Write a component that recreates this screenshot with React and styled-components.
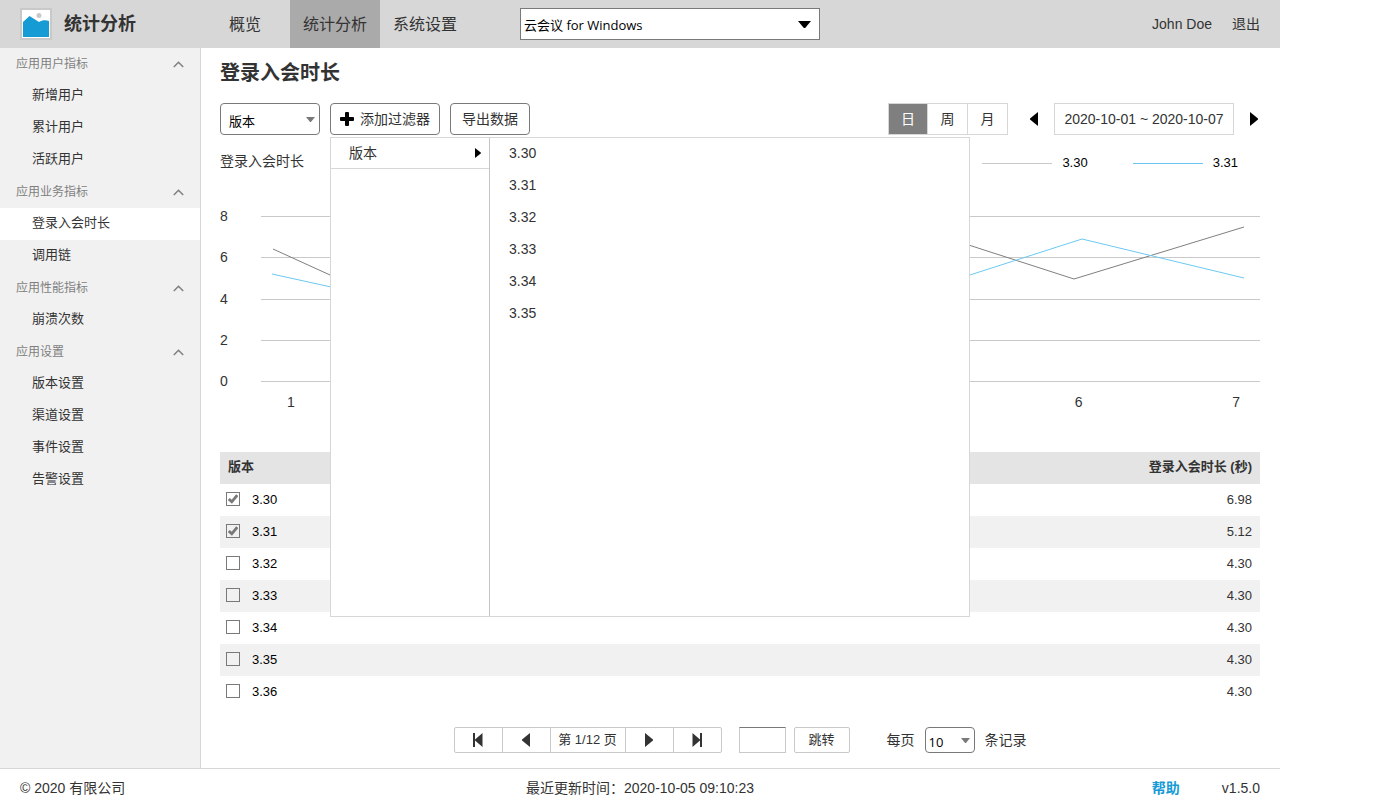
import React, { useState } from "react";
import styled, { createGlobalStyle, css } from "styled-components";

const GlobalStyle = createGlobalStyle`
  *, *::before, *::after { box-sizing: border-box; }
  body {
    margin: 0;
    background: #fff;
    color: #333;
    font-family: "Liberation Sans", "Noto Sans CJK SC", sans-serif;
    font-size: 14px;
    line-height: 20px;
  }
  button, input, select { font: inherit; color: inherit; margin: 0; }
  a { color: inherit; text-decoration: none; }
  ul { list-style: none; margin: 0; padding: 0; }
`;

const Page = styled.div`
  display: flex;
  flex-direction: column;
  max-width: 1280px;
  min-height: 100vh;
`;

const Header = styled.header`
  display: flex;
  align-items: center;
  height: 48px;
  padding-right: 20px;
  background: #d7d7d7;
`;

const Brand = styled.div`
  display: flex;
  align-items: center;
  gap: 12px;
  width: 200px;
  padding-left: 20px;
  font-size: 18px;
  font-weight: 700;
  svg { display: block; }
`;

const Nav = styled.nav`
  display: flex;
  align-self: stretch;
`;

const NavLink = styled.a`
  display: flex;
  align-items: center;
  justify-content: center;
  width: 90px;
  padding-top: 2px;
  font-size: 16px;
  background: ${(p) => (p.$active ? "#aaa" : "transparent")};
`;

const UserMenu = styled.div`
  display: flex;
  gap: 20px;
  margin-left: auto;
`;

const SelectBox = styled.span`
  display: inline-grid;
  align-items: center;
  width: ${(p) => p.$width}px;
  select, svg { grid-area: 1 / 1; }
  svg {
    justify-self: end;
    margin-right: ${(p) => (p.$square ? 9 : 5)}px;
    pointer-events: none;
  }
`;

const Select = styled.select`
  appearance: none;
  width: 100%;
  height: ${(p) => p.$height}px;
  padding: ${(p) => p.$pad};
  border: 1px solid #797979;
  border-radius: ${(p) => (p.$square ? 0 : 4)}px;
  background: #fff;
  color: #000;
  font-family: "Open Sans", "Noto Sans CJK SC", sans-serif;
  font-size: 13px;
`;

const AppPicker = styled.div`
  display: flex;
  margin-left: 50px;
`;

const Body = styled.div`
  display: flex;
  flex: 1;
`;

const Sidebar = styled.aside`
  flex: none;
  width: 201px;
  border-right: 1px solid #d7d7d7;
  background: #f1f1f1;
`;

const GroupButton = styled.button`
  display: flex;
  align-items: center;
  justify-content: space-between;
  width: 100%;
  height: 32px;
  padding: 0 16px;
  border: 0;
  background: none;
  color: #7f7f7f;
  font-size: 12px;
`;

const SideLink = styled.a`
  display: block;
  height: 32px;
  padding: 5px 32px 7px;
  font-size: 13px;
  background: ${(p) => (p.$active ? "#fff" : "transparent")};
`;

const Main = styled.main`
  flex: 1;
  min-width: 0;
  padding: 11px 20px 15px 19px;
`;

const Title = styled.h1`
  margin: 0;
  font-size: 20px;
  line-height: 28px;
  font-weight: 700;
`;

const Toolbar = styled.div`
  display: flex;
  align-items: center;
  gap: 10px;
  margin-top: 16px;
`;

const FilterAnchor = styled.div`
  position: relative;
`;

const ToolButton = styled.button`
  display: flex;
  align-items: center;
  justify-content: center;
  gap: 6px;
  width: ${(p) => p.$width}px;
  height: 32px;
  padding: 0;
  border: 1px solid #797979;
  border-radius: 4px;
  background: #fff;
`;

const Popup = styled.div`
  position: absolute;
  z-index: 2;
  top: 34px;
  left: 0;
  display: flex;
  width: 640px;
  height: 480px;
  border: 1px solid #d7d7d7;
  background: #fff;
`;

const PopupFields = styled.div`
  width: 159px;
  border-right: 1px solid #c4c4c4;
`;

const PopupValues = styled.ul`
  flex: 1;
`;

const FieldButton = styled.button`
  display: flex;
  align-items: center;
  justify-content: space-between;
  width: 100%;
  height: 31px;
  padding: 0 8px 0 18px;
  border: 0;
  border-bottom: 1px solid #d7d7d7;
  background: none;
`;

const ValueButton = styled.button`
  display: block;
  width: 100%;
  height: 32px;
  padding: 0 19px 2px;
  border: 0;
  background: none;
  text-align: left;
`;

const DateTools = styled.div`
  display: flex;
  align-items: center;
  margin-left: auto;
`;

const Segments = styled.div`
  display: flex;
  margin-right: 20px;
  border: 1px solid #d7d7d7;
`;

const Segment = styled.button`
  width: ${(p) => (p.$last ? 39 : 40)}px;
  height: 30px;
  padding: 0;
  border: 0;
  border-right: ${(p) => (p.$last ? 0 : 1)}px solid #d7d7d7;
  background: ${(p) => (p.$active ? "#7f7f7f" : "#fff")};
  color: ${(p) => (p.$active ? "#fff" : "#333")};
  &:first-child { width: 39px; }
`;

const ArrowButton = styled.button`
  display: flex;
  padding: 8px 2px;
  border: 0;
  background: none;
`;

const DateRange = styled.button`
  width: 180px;
  height: 32px;
  margin: 0 14px;
  padding: 0;
  border: 1px solid #d7d7d7;
  background: #fff;
`;

const ChartHeader = styled.div`
  display: flex;
  align-items: flex-start;
  justify-content: space-between;
  margin-top: 16px;
`;

const Legend = styled.ul`
  display: flex;
  gap: 45px;
  padding: 2px 22px 0 0;
`;

const LegendItem = styled.li`
  display: flex;
  align-items: center;
  gap: 10px;
  color: #000;
  font-size: 13px;
  &::before {
    content: "";
    width: 70px;
    height: 1px;
    background: ${(p) => p.$color};
  }
`;

const Chart = styled.div`
  display: grid;
  grid-template-columns: 41px 1fr;
  margin-top: 35px;
`;

const YAxis = styled.div`
  display: flex;
  flex-direction: column;
  justify-content: space-between;
  height: 181px;
  line-height: 16px;
`;

const Plot = styled.svg`
  display: block;
  width: 100%;
  height: 166px;
  margin: 8px 0;
`;

const XAxis = styled.div`
  grid-column: 2;
  display: flex;
  justify-content: space-between;
  padding: 2px 20px 0 26px;
`;

const Table = styled.table`
  width: 100%;
  margin-top: 40px;
  border-collapse: collapse;
  font-size: 13px;
  th, td { height: 32px; padding: 0 8px; }
  th { padding-bottom: 2px; text-align: left; font-weight: 700; }
  th:last-child, td:last-child { text-align: right; }
  td:first-child { padding-left: 6px; }
  thead { background: #e4e4e4; }
  tbody tr:nth-child(even) { background: #f1f1f1; }
`;

const CheckLabel = styled.label`
  display: flex;
  align-items: center;
  gap: 12px;
  color: #000;
`;

const CheckCell = styled.span`
  display: grid;
  place-items: center;
  height: 14px;
  margin-bottom: 2px;
  input, svg { grid-area: 1 / 1; }
  svg { pointer-events: none; }
`;

const CheckInput = styled.input`
  appearance: none;
  width: 14px;
  height: 14px;
  border: 1px solid #797979;
`;

const PagerRow = styled.div`
  display: flex;
  align-items: center;
  justify-content: center;
  margin-top: 19px;
`;

const pagerCell = css`
  display: flex;
  align-items: center;
  justify-content: center;
  height: 24px;
  padding: 0;
  border: 0;
  font-size: 13px;
  & + & { border-left: 1px solid #c9c9c9; }
`;

const Pager = styled.div`
  display: flex;
  border: 1px solid #c9c9c9;
  border-radius: 2px;
`;

const PagerButton = styled.button`
  ${pagerCell}
  width: 48px;
  background: none;
  &:first-child { width: 47px; }
`;

const PagerStatus = styled.span`
  ${pagerCell}
  width: 76px;
  border-left: 1px solid #c9c9c9;
  border-right: 1px solid #c9c9c9;
  & + button { width: 47px; }
`;

const PageInput = styled.input`
  width: 47px;
  height: 26px;
  margin: 0 8px 0 17px;
  padding: 0 4px;
  border: 1px solid #c9c9c9;
  border-top: 1px solid #797979;
`;

const JumpButton = styled.button`
  width: 56px;
  height: 26px;
  padding: 0;
  border: 1px solid #c9c9c9;
  border-radius: 2px;
  background: #fff;
  font-size: 13px;
`;

const PageSize = styled.label`
  display: flex;
  align-items: center;
  gap: 10px;
  margin-left: 37px;
`;

const Footer = styled.footer`
  display: grid;
  grid-template-columns: 1fr auto 1fr;
  padding: 9px 20px 12px;
  border-top: 1px solid #d7d7d7;
`;

const FooterLinks = styled.div`
  display: flex;
  justify-content: flex-end;
  gap: 42px;
`;

const HelpLink = styled.a`
  color: #169bd5;
  font-weight: 700;
`;

const Logo = () => (
  <svg width="32" height="32" viewBox="0 0 32 32" aria-hidden="true">
    <rect x="1" y="1" width="30" height="30" fill="#fff" stroke="#c9c9c9" strokeWidth="2" />
    <path d="M3 14 9.500 8 19 14c3-2 7-2 10-1v16H3z" fill="#169bd5" />
    <circle cx="19" cy="7.500" r="2.500" fill="#c9c9c9" />
  </svg>
);

const Caret = ({ width = 9, height = 5, color = "#797979" }) => (
  <svg width={width} height={height} viewBox="0 0 10 5" preserveAspectRatio="none" fill={color} aria-hidden="true">
    <path d="M0 0h10L5.500 5h-1z" />
  </svg>
);

const Chevron = () => (
  <svg width="11" height="7" viewBox="0 0 11 7" fill="none" stroke="#7f7f7f" strokeWidth="1.500" aria-hidden="true">
    <path d="M.8 6 5.500 1.300 10.200 6" />
  </svg>
);

const Plus = () => (
  <svg width="14" height="14" viewBox="0 0 14 14" fill="#000" aria-hidden="true">
    <rect x="5" width="4" height="14" rx="1" />
    <rect y="5" width="14" height="4" rx="1" />
  </svg>
);

const Triangle = ({ left, width = 8, height = 14, color = "#000" }) => (
  <svg width={width} height={height} viewBox="0 0 8 14" preserveAspectRatio="none" fill={color} aria-hidden="true">
    <path d={left ? "M8 0v14L0 7.500v-1z" : "M0 0v14l8-6.500v-1z"} />
  </svg>
);

const Step = ({ left }) => (
  <svg width="10" height="14" viewBox="0 0 10 14" fill="#333" aria-hidden="true">
    <path d={left ? "M0 0h2v6.500L9.500 0v14L2 7.500V14H0z" : "M10 0H8v6.500L.5 0v14L8 7.500V14h2z"} />
  </svg>
);

const Tick = () => (
  <svg width="10" height="10" viewBox="0 0 10 10" fill="none" stroke="#797979" strokeWidth="2.800" aria-hidden="true">
    <path d="M.8 5 3.800 7.800 9.200 1.200" />
  </svg>
);

const menu = [
  ["应用用户指标", ["新增用户", "累计用户", "活跃用户"]],
  ["应用业务指标", ["登录入会时长", "调用链"]],
  ["应用性能指标", ["崩溃次数"]],
  ["应用设置", ["版本设置", "渠道设置", "事件设置", "告警设置"]],
];

const rows = [
  ["3.30", "6.98"],
  ["3.31", "5.12"],
  ["3.32", "4.30"],
  ["3.33", "4.30"],
  ["3.34", "4.30"],
  ["3.35", "4.30"],
  ["3.36", "4.30"],
];

const gridLines = [0, 41, 83, 124, 165];

export default function App() {
  const [checked, setChecked] = useState(["3.30", "3.31"]);
  const [unit, setUnit] = useState("日");
  const toggle = (v) =>
    setChecked((list) => (list.includes(v) ? list.filter((x) => x !== v) : [...list, v]));

  return (
    <Page>
      <GlobalStyle />
      <Header>
        <Brand>
          <Logo />
          统计分析
        </Brand>
        <Nav>
          <NavLink href="#overview">概览</NavLink>
          <NavLink href="#stats" $active>统计分析</NavLink>
          <NavLink href="#settings">系统设置</NavLink>
        </Nav>
        <AppPicker>
          <SelectBox $width={300} $square>
            <Select $height={32} $square $pad="2px 24px 0 3px" aria-label="应用">
              <option>云会议 for Windows</option>
            </Select>
            <Caret width={13} height={7} color="#000" />
          </SelectBox>
        </AppPicker>
        <UserMenu>
          <a href="#user">John Doe</a>
          <a href="#logout">退出</a>
        </UserMenu>
      </Header>

      <Body>
        <Sidebar>
          {menu.map(([group, items]) => (
            <React.Fragment key={group}>
              <GroupButton type="button">
                {group}
                <Chevron />
              </GroupButton>
              <ul>
                {items.map((item) => (
                  <li key={item}>
                    <SideLink href="#item" $active={item === "登录入会时长"}>{item}</SideLink>
                  </li>
                ))}
              </ul>
            </React.Fragment>
          ))}
        </Sidebar>

        <Main>
          <Title>登录入会时长</Title>
          <Toolbar>
            <SelectBox $width={100}>
              <Select $height={32} $pad="3px 20px 0 8px" aria-label="维度">
                <option>版本</option>
              </Select>
              <Caret />
            </SelectBox>
            <FilterAnchor>
              <ToolButton type="button" $width={110}>
                <Plus />
                添加过滤器
              </ToolButton>
              <Popup>
                <PopupFields>
                  <FieldButton type="button">
                    版本
                    <Triangle width={6} height={10} />
                  </FieldButton>
                </PopupFields>
                <PopupValues>
                  {["3.30", "3.31", "3.32", "3.33", "3.34", "3.35"].map((v) => (
                    <li key={v}>
                      <ValueButton type="button">{v}</ValueButton>
                    </li>
                  ))}
                </PopupValues>
              </Popup>
            </FilterAnchor>
            <ToolButton type="button" $width={80}>导出数据</ToolButton>
            <DateTools>
              <Segments>
                {["日", "周", "月"].map((u) => (
                  <Segment key={u} type="button" $active={u === unit} $last={u === "月"} onClick={() => setUnit(u)}>
                    {u}
                  </Segment>
                ))}
              </Segments>
              <ArrowButton type="button" aria-label="上一周期"><Triangle left /></ArrowButton>
              <DateRange type="button">2020-10-01 ~ 2020-10-07</DateRange>
              <ArrowButton type="button" aria-label="下一周期"><Triangle /></ArrowButton>
            </DateTools>
          </Toolbar>

          <ChartHeader>
            <span>登录入会时长</span>
            <Legend>
              <LegendItem $color="#c9c9c9">3.30</LegendItem>
              <LegendItem $color="#6cc4ee">3.31</LegendItem>
            </Legend>
          </ChartHeader>
          <Chart>
            <YAxis>
              {[8, 6, 4, 2, 0].map((n) => <span key={n}>{n}</span>)}
            </YAxis>
            <Plot viewBox="0 0 999 166" preserveAspectRatio="none" fill="none">
              {gridLines.map((y) => (
                <rect key={y} y={y} width="999" height="1" fill="#c9c9c9" />
              ))}
              <polyline
                points="12,33 170,105 328,60 486,90 655,12 813,63 983,11"
                stroke="#7f7f7f"
                vectorEffect="non-scaling-stroke"
              />
              <polyline
                points="11,58 170,93 328,70 486,100 659,75 821,23 983,62"
                stroke="#6cc9f0"
                vectorEffect="non-scaling-stroke"
              />
            </Plot>
            <XAxis>
              {[1, 2, 3, 4, 5, 6, 7].map((n) => <span key={n}>{n}</span>)}
            </XAxis>
          </Chart>

          <Table>
            <thead>
              <tr>
                <th scope="col">版本</th>
                <th scope="col">登录入会时长 (秒)</th>
              </tr>
            </thead>
            <tbody>
              {rows.map(([version, seconds]) => (
                <tr key={version}>
                  <td>
                    <CheckLabel>
                      <CheckCell>
                        <CheckInput
                          type="checkbox"
                          checked={checked.includes(version)}
                          onChange={() => toggle(version)}
                        />
                        {checked.includes(version) && <Tick />}
                      </CheckCell>
                      {version}
                    </CheckLabel>
                  </td>
                  <td>{seconds}</td>
                </tr>
              ))}
            </tbody>
          </Table>

          <PagerRow>
            <Pager>
              <PagerButton type="button" aria-label="首页"><Step left /></PagerButton>
              <PagerButton type="button" aria-label="上一页"><Triangle left color="#333" /></PagerButton>
              <PagerStatus>第 1/12 页</PagerStatus>
              <PagerButton type="button" aria-label="下一页"><Triangle color="#333" /></PagerButton>
              <PagerButton type="button" aria-label="末页"><Step /></PagerButton>
            </Pager>
            <PageInput type="text" aria-label="页码" />
            <JumpButton type="button">跳转</JumpButton>
            <PageSize>
              每页
              <SelectBox $width={50}>
                <Select $height={26} $pad="3px 16px 0 3px">
                  <option>10</option>
                </Select>
                <Caret />
              </SelectBox>
              条记录
            </PageSize>
          </PagerRow>
        </Main>
      </Body>

      <Footer>
        <span>© 2020 有限公司</span>
        <span>最近更新时间：2020-10-05 09:10:23</span>
        <FooterLinks>
          <HelpLink href="#help">帮助</HelpLink>
          <span>v1.5.0</span>
        </FooterLinks>
      </Footer>
    </Page>
  );
}
